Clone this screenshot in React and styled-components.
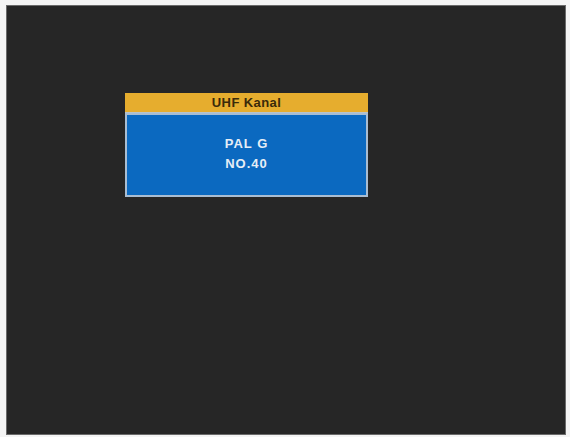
import React from "react";
import styled, { createGlobalStyle } from "styled-components";

const Global = createGlobalStyle`
  html, body { margin: 0; padding: 0; background: #ffffff; }
  body { width: 570px; height: 437px; overflow: hidden; font-family: "Liberation Sans", Arial, sans-serif; }
`;

const Frame = styled.div`
  width: 570px;
  height: 437px;
  box-sizing: border-box;
  padding: 5px 4px 2px 6px;
  background: #f4f4f4;
`;

const Screen = styled.div`
  width: 100%;
  height: 100%;
  box-sizing: border-box;
  background: #262626;
  border: 1px solid #6a6a6a;
  padding: 87px 0 0 118px;
`;

const Dialog = styled.div`
  width: 243px;
  display: flex;
  flex-direction: column;
`;

const Title = styled.div`
  height: 19px;
  background: #e6ad2e;
  color: #3a2a0a;
  font-weight: bold;
  font-size: 13px;
  letter-spacing: 0.4px;
  display: flex;
  align-items: center;
  justify-content: center;
  border-bottom: 1px solid #b8c4cc;
`;

const Body = styled.div`
  background: #0b69c0;
  border: 2px solid #a9bdd2;
  display: flex;
  flex-direction: column;
  align-items: center;
  padding-top: 22px;
  gap: 7px;
  color: #e6eef6;
  font-weight: bold;
  font-size: 13px;
  letter-spacing: 1px;
  height: 58px;
`;

const Line = styled.div`
  line-height: 13px;
`;

export default function App() {
  return (
    <>
      <Global />
      <Frame>
        <Screen>
          <Dialog>
            <Title>UHF Kanal</Title>
            <Body>
              <Line>PAL G</Line>
              <Line>NO.40</Line>
            </Body>
          </Dialog>
        </Screen>
      </Frame>
    </>
  );
}
